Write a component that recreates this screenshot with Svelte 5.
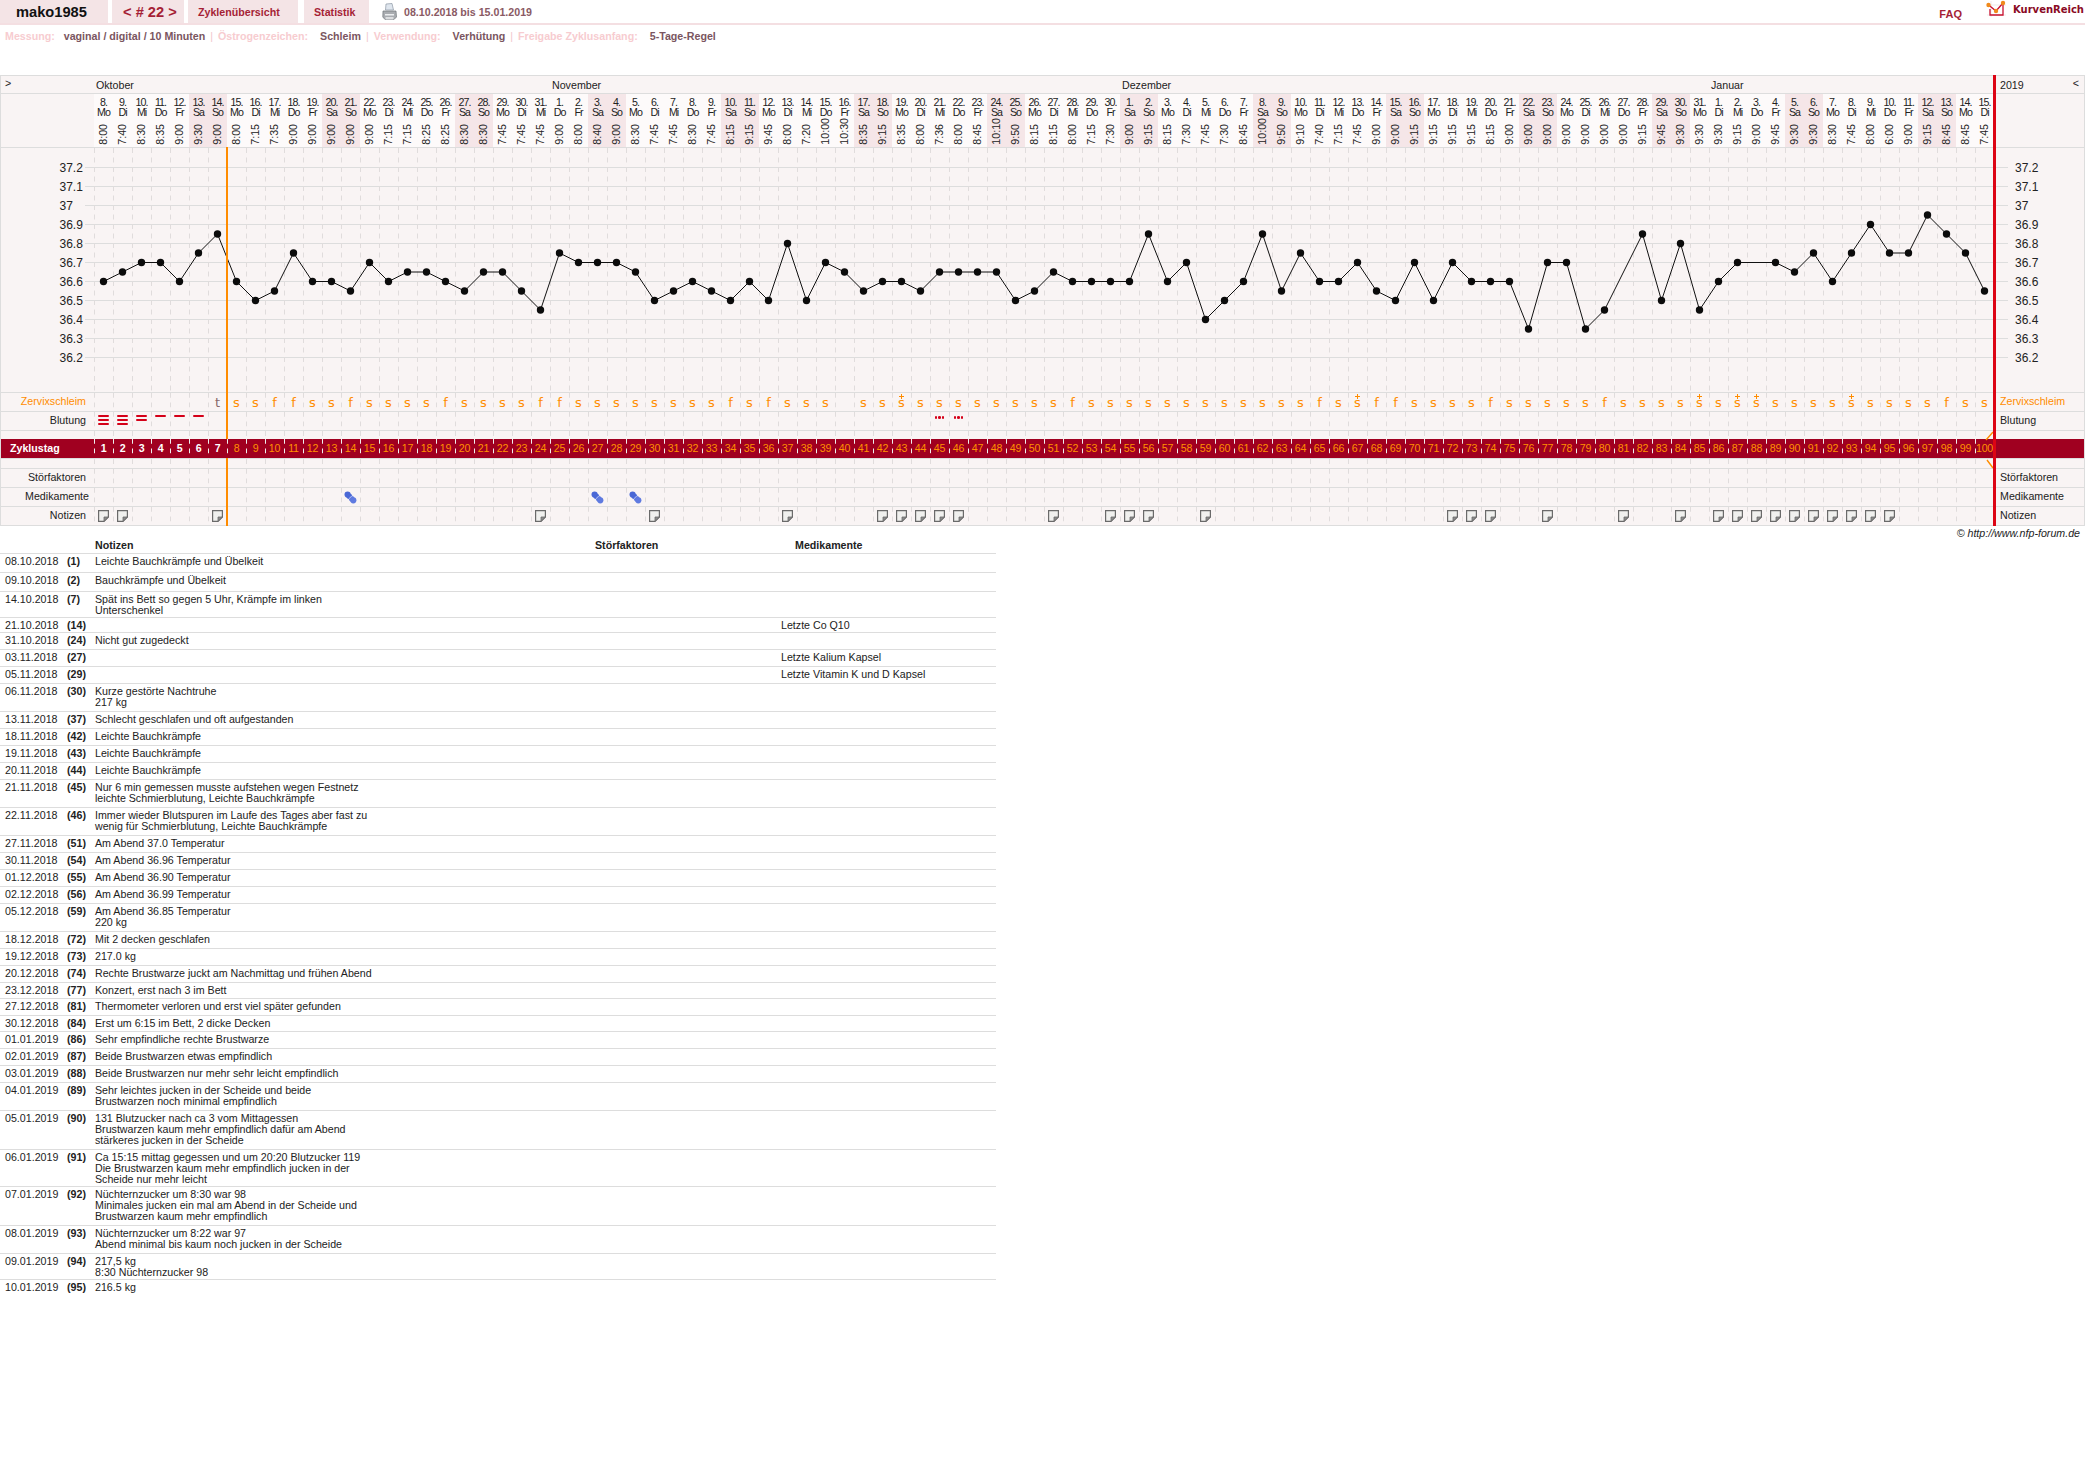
<script>
    const COL = 19;
    const LEFT = 94;
    const wd = ['So', 'Mo', 'Di', 'Mi', 'Do', 'Fr', 'Sa'];

    const times = ('8:00 7:40 8:30 8:35 9:00 9:30 9:00 8:00 7:15 7:35 9:00 9:00 9:00 9:00 9:00 7:15 7:15 8:25 8:25 8:30 8:30 7:45 7:45 7:45 ' +
        '9:00 8:00 8:40 9:00 8:30 7:45 7:45 8:30 7:45 8:15 9:15 9:45 8:00 7:20 10:00 10:30 8:35 9:15 8:35 8:00 7:36 8:00 8:45 10:10 9:50 8:15 8:15 8:00 7:15 7:30 ' +
        '9:00 9:15 8:15 7:30 7:45 7:30 8:45 10:00 9:50 9:10 7:40 7:15 7:45 9:00 9:00 9:15 9:15 9:15 9:15 8:15 9:00 9:00 9:00 9:00 9:00 9:00 9:00 9:15 9:45 9:30 9:30 ' +
        '9:30 9:15 9:00 9:45 9:30 9:30 8:30 7:45 8:00 6:00 9:00 9:15 8:45 8:45 7:45').split(' ');

    const days = times.map((time, i) => {
        const d = new Date(Date.UTC(2018, 9, 8 + i));
        const w = d.getUTCDay();
        return { n: i + 1, date: d.getUTCDate(), name: wd[w], weekend: w === 0 || w === 6, time };
    });

    const temps = [36.6, 36.65, 36.7, 36.7, 36.6, 36.75, 36.85, 36.6, 36.5, 36.55, 36.75, 36.6, 36.6, 36.55, 36.7, 36.6, 36.65, 36.65, 36.6, 36.55,
        36.65, 36.65, 36.55, 36.45, 36.75, 36.7, 36.7, 36.7, 36.65, 36.5, 36.55, 36.6, 36.55, 36.5, 36.6, 36.5, 36.8, 36.5, 36.7, 36.65,
        36.55, 36.6, 36.6, 36.55, 36.65, 36.65, 36.65, 36.65, 36.5, 36.55, 36.65, 36.6, 36.6, 36.6, 36.6, 36.85, 36.6, 36.7, 36.4, 36.5,
        36.6, 36.85, 36.55, 36.75, 36.6, 36.6, 36.7, 36.55, 36.5, 36.7, 36.5, 36.7, 36.6, 36.6, 36.6, 36.35, 36.7, 36.7, 36.35, 36.45,
        null, 36.85, 36.5, 36.8, 36.45, 36.6, 36.7, null, 36.7, 36.65, 36.75, 36.6, 36.75, 36.9, 36.75, 36.75, 36.95, 36.85, 36.75, 36.55];

    const tempY = (t) => 167.5 + (37.2 - t) * 190;
    const colX = (i) => LEFT + COL * (i + 0.5);
    const points = temps.map((t, i) => (t === null ? null : { x: colX(i), y: tempY(t) })).filter(Boolean);
    const linePoints = points.map((p) => `${p.x},${p.y}`).join(' ');
    const gridTemps = ['37.2', '37.1', '37', '36.9', '36.8', '36.7', '36.6', '36.5', '36.4', '36.3', '36.2'];

    const mucus = ('......t' + 'ssffssfssssfssssffsssssss' + 'sfsfsss' + '.' + 'ss+' + 'ssssssss' + 'f' + 'ssssssssssss' + 'f' + 's+' + 'ff' + 'ssss' + 'f' +
        'sssss' + 'f' + 'ssss' + '+s++' + 'ssss' + '+' + 'ssss' + 'f' + 'ss').split('');

    const bleeding = { 1: 3, 2: 3, 3: 2, 4: 1, 5: 1, 6: 1 };
    const spotting = [45, 46];
    const meds = [14, 27, 29];
    const noteDays = [1, 2, 7, 24, 30, 37, 42, 43, 44, 45, 46, 51, 54, 55, 56, 59, 72, 73, 74, 77, 81, 84, 86, 87, 88, 89, 90, 91, 92, 93, 94, 95];

    const months = [
        { label: 'Oktober', span: 24 },
        { label: 'November', span: 30 },
        { label: 'Dezember', span: 31 },
        { label: 'Januar', span: 15 }
    ];

    const notes = [
        { d: '08.10.2018', n: 1, h: 19, t: ['Leichte Bauchkrämpfe und Übelkeit'] },
        { d: '09.10.2018', n: 2, h: 19, t: ['Bauchkrämpfe und Übelkeit'] },
        { d: '14.10.2018', n: 7, h: 26, t: ['Spät ins Bett so gegen 5 Uhr, Krämpfe im linken', 'Unterschenkel'] },
        { d: '21.10.2018', n: 14, h: 15, t: [], m: 'Letzte Co Q10' },
        { d: '31.10.2018', n: 24, h: 17, t: ['Nicht gut zugedeckt'] },
        { d: '03.11.2018', n: 27, h: 17, t: [], m: 'Letzte Kalium Kapsel' },
        { d: '05.11.2018', n: 29, h: 17, t: [], m: 'Letzte Vitamin K und D Kapsel' },
        { d: '06.11.2018', n: 30, h: 28, t: ['Kurze gestörte Nachtruhe', '217 kg'] },
        { d: '13.11.2018', n: 37, h: 17, t: ['Schlecht geschlafen und oft aufgestanden'] },
        { d: '18.11.2018', n: 42, h: 17, t: ['Leichte Bauchkrämpfe'] },
        { d: '19.11.2018', n: 43, h: 17, t: ['Leichte Bauchkrämpfe'] },
        { d: '20.11.2018', n: 44, h: 17, t: ['Leichte Bauchkrämpfe'] },
        { d: '21.11.2018', n: 45, h: 28, t: ['Nur 6 min gemessen musste aufstehen wegen Festnetz', 'leichte Schmierblutung, Leichte Bauchkrämpfe'] },
        { d: '22.11.2018', n: 46, h: 28, t: ['Immer wieder Blutspuren im Laufe des Tages aber fast zu', 'wenig für Schmierblutung, Leichte Bauchkrämpfe'] },
        { d: '27.11.2018', n: 51, h: 17, t: ['Am Abend 37.0 Temperatur'] },
        { d: '30.11.2018', n: 54, h: 17, t: ['Am Abend 36.96 Temperatur'] },
        { d: '01.12.2018', n: 55, h: 17, t: ['Am Abend 36.90 Temperatur'] },
        { d: '02.12.2018', n: 56, h: 17, t: ['Am Abend 36.99 Temperatur'] },
        { d: '05.12.2018', n: 59, h: 28, t: ['Am Abend 36.85 Temperatur', '220 kg'] },
        { d: '18.12.2018', n: 72, h: 17, t: ['Mit 2 decken geschlafen'] },
        { d: '19.12.2018', n: 73, h: 17, t: ['217.0 kg'] },
        { d: '20.12.2018', n: 74, h: 17, t: ['Rechte Brustwarze juckt am Nachmittag und frühen Abend'] },
        { d: '23.12.2018', n: 77, h: 16, t: ['Konzert, erst nach 3 im Bett'] },
        { d: '27.12.2018', n: 81, h: 17, t: ['Thermometer verloren und erst viel später gefunden'] },
        { d: '30.12.2018', n: 84, h: 16, t: ['Erst um 6:15 im Bett, 2 dicke Decken'] },
        { d: '01.01.2019', n: 86, h: 17, t: ['Sehr empfindliche rechte Brustwarze'] },
        { d: '02.01.2019', n: 87, h: 17, t: ['Beide Brustwarzen etwas empfindlich'] },
        { d: '03.01.2019', n: 88, h: 17, t: ['Beide Brustwarzen nur mehr sehr leicht empfindlich'] },
        { d: '04.01.2019', n: 89, h: 28, t: ['Sehr leichtes jucken in der Scheide und beide', 'Brustwarzen noch minimal empfindlich'] },
        { d: '05.01.2019', n: 90, h: 39, t: ['131 Blutzucker nach ca 3 vom Mittagessen', 'Brustwarzen kaum mehr empfindlich dafür am Abend', 'stärkeres jucken in der Scheide'] },
        { d: '06.01.2019', n: 91, h: 37, t: ['Ca 15:15 mittag gegessen und um 20:20 Blutzucker 119', 'Die Brustwarzen kaum mehr empfindlich jucken in der', 'Scheide nur mehr leicht'] },
        { d: '07.01.2019', n: 92, h: 39, t: ['Nüchternzucker um 8:30 war 98', 'Minimales jucken ein mal am Abend in der Scheide und', 'Brustwarzen kaum mehr empfindlich'] },
        { d: '08.01.2019', n: 93, h: 28, t: ['Nüchternzucker um 8:22 war 97', 'Abend minimal bis kaum noch jucken in der Scheide'] },
        { d: '09.01.2019', n: 94, h: 26, t: ['217,5 kg', '8:30 Nüchternzucker 98'] },
        { d: '10.01.2019', n: 95, h: 26, t: ['216.5 kg'], last: true }
    ];
</script>

<header class="topbar">
    <div class="tab user">mako1985</div>
    <div class="tab cycle">&lt; # 22 &gt;</div>
    <a class="tab link wide" href="#zyklen">Zyklenübersicht</a>
    <a class="tab link stat" href="#statistik">Statistik</a>
    <svg class="printer" width="15" height="18" viewBox="0 0 15 18">
        <path d="M4 1 L10 0.5 L11.5 7 L3.5 7 Z" fill="#dfe6ee" stroke="#8c97a3" stroke-width="0.7" />
        <path d="M1 8 L14 8 L14.5 14 L12 16.5 L3 16.5 L0.8 14 Z" fill="#a9acb0" stroke="#70757a" stroke-width="0.7" />
        <rect x="3" y="11" width="9" height="1.5" fill="#eceeef" />
        <rect x="3.5" y="14" width="8" height="2.5" fill="#dcdee0" />
    </svg>
    <span class="range">08.10.2018 bis 15.01.2019</span>
    <a class="faq" href="#faq">FAQ</a>
    <svg class="logo" width="21" height="18" viewBox="0 0 21 18">
        <path d="M1 5 H20 M5 1 V17 M1 15 H20" stroke="#e8e2e2" stroke-width="0.7" fill="none" />
        <path d="M4 9 V15 H17 V4" fill="none" stroke="#c8102e" stroke-width="1.3" />
        <path d="M2 4.5 L10 11 L17 3" fill="none" stroke="#c8102e" stroke-width="1.3" />
        <circle cx="2.5" cy="5" r="2.2" fill="#f08a1d" />
        <circle cx="10" cy="11" r="2.2" fill="#f08a1d" />
        <circle cx="17" cy="3" r="2.2" fill="#f08a1d" />
    </svg>
    <span class="brand">KurvenReich</span>
</header>

<div class="info">
    <span class="key first">Messung:</span><span class="val">vaginal / digital / 10 Minuten</span>
    <span class="sep">|</span>
    <span class="key">Östrogenzeichen:</span><span class="val">Schleim</span>
    <span class="sep">|</span>
    <span class="key">Verwendung:</span><span class="val">Verhütung</span>
    <span class="sep">|</span>
    <span class="key">Freigabe Zyklusanfang:</span><span class="val">5-Tage-Regel</span>
</div>

<section class="chart">
    <div class="row monthrow">
        <div class="lab arrow">&gt;</div>
        <div class="cols">
            {#each months as m}
                <div class="month" style="width:{m.span * COL}px">{m.label}</div>
            {/each}
        </div>
        <div class="rlab yearcell"><span>2019</span><span class="arrow-r">&lt;</span></div>
    </div>

    <div class="row daterow">
        <div class="lab"></div>
        <div class="cols">
            {#each days as d}
                <div class="day" class:weekend={d.weekend}>
                    <span class="num">{d.date}.</span>
                    <span class="wd">{d.name}</span>
                    <span class="time">{d.time}</span>
                </div>
            {/each}
        </div>
        <div class="rlab"></div>
    </div>

    <div class="row plotrow">
        <svg class="plot" width="2083" height="244" viewBox="1 148 2083 244">
            {#each gridTemps as g, i}
                <line x1="85" x2="2008" y1={167.5 + i * 19} y2={167.5 + i * 19} class="grid" />
                <text x="59.5" y={171.5 + i * 19} class="tick">{g}</text>
                <text x="2015" y={171.5 + i * 19} class="tick">{g}</text>
            {/each}
            {#each days as d, i}
                <line x1={LEFT + i * COL + 0.5} x2={LEFT + i * COL + 0.5} y1="148" y2="392" class="dash" />
            {/each}
            <polyline points={linePoints} class="curve" />
            {#each points as p}
                <circle cx={p.x} cy={p.y} r="3.7" class="dot" />
            {/each}
        </svg>
    </div>

    <div class="row lane">
        <div class="lab orange">Zervixschleim</div>
        <div class="cols">
            {#each mucus as c}
                <div class="cell mucus" class:brown={c === 't'}>
                    {#if c === '+'}<i class="plus"></i>s{:else if c !== '.'}{c}{/if}
                </div>
            {/each}
        </div>
        <div class="rlab orange">Zervixschleim</div>
    </div>

    <div class="row lane">
        <div class="lab">Blutung</div>
        <div class="cols">
            {#each days as d}
                <div class="cell bleed">
                    {#if bleeding[d.n]}
                        {#each { length: bleeding[d.n] } as _}<i class="bar"></i>{/each}
                    {:else if spotting.includes(d.n)}
                        <i class="spot"></i><i class="spot"></i><i class="spot"></i>
                    {/if}
                </div>
            {/each}
        </div>
        <div class="rlab">Blutung</div>
    </div>

    <div class="row gap">
        <div class="lab"></div>
        <div class="cols">{#each days as d}<div class="cell"></div>{/each}</div>
        <div class="rlab"></div>
    </div>

    <div class="row band">
        <div class="lab zyklus">Zyklustag</div>
        <div class="cols">
            {#each days as d}
                <div class="cell bandcell" class:past={d.n <= 7}>{d.n}</div>
            {/each}
        </div>
        <div class="rlab"></div>
    </div>

    <div class="row gap tall">
        <div class="lab"></div>
        <div class="cols">{#each days as d}<div class="cell"></div>{/each}</div>
        <div class="rlab"></div>
    </div>

    <div class="row lane">
        <div class="lab">Störfaktoren</div>
        <div class="cols">{#each days as d}<div class="cell"></div>{/each}</div>
        <div class="rlab">Störfaktoren</div>
    </div>

    <div class="row lane">
        <div class="lab medlab">Medikamente</div>
        <div class="cols">
            {#each days as d}
                <div class="cell center">
                    {#if meds.includes(d.n)}
                        <svg width="13" height="13" viewBox="0 0 13 13">
                            <circle cx="3.6" cy="3.6" r="3.1" fill="#4a68d6" />
                            <circle cx="5.3" cy="5.3" r="2.8" fill="#4a68d6" />
                            <circle cx="7.7" cy="7.7" r="2.8" fill="#5f7ae0" />
                            <circle cx="9.3" cy="9.3" r="3.1" fill="#5f7ae0" />
                            <path d="M4.4 8.4 L8.4 4.4" stroke="#c3cdf2" stroke-width="0.8" />
                        </svg>
                    {/if}
                </div>
            {/each}
        </div>
        <div class="rlab">Medikamente</div>
    </div>

    <div class="row lane last">
        <div class="lab">Notizen</div>
        <div class="cols">
            {#each days as d}
                <div class="cell center">
                    {#if noteDays.includes(d.n)}
                        <svg width="11" height="12" viewBox="0 0 11 12">
                            <path d="M0.6 0.6 H10.4 V7 L6 11.4 H0.6 Z" fill="#f0f0ee" stroke="#6a6a6a" stroke-width="1.2" />
                            <path d="M6 11.4 V7 H10.4 Z" fill="#8c8c8c" stroke="#6a6a6a" stroke-width="0.8" />
                        </svg>
                    {/if}
                </div>
            {/each}
        </div>
        <div class="rlab">Notizen</div>
    </div>

    <div class="vline orangeline"></div>
    <div class="vline redline"></div>
    <svg class="ticks" width="10" height="38" viewBox="0 0 10 38">
        <path d="M1 9 L8 1 M2 29 L8 37" stroke="#ff8c00" stroke-width="1.4" fill="none" />
    </svg>
</section>

<div class="credit">© http://www.nfp-forum.de</div>

<section class="list">
    <div class="line head">
        <span></span><span></span><span>Notizen</span><span>Störfaktoren</span><span class="medhead">Medikamente</span>
    </div>
    {#each notes as r}
        <div class="line" class:nolast={r.last} style="height:{r.h}px">
            <span>{r.d}</span>
            <b>({r.n})</b>
            <span>{#each r.t as l}<span class="textline">{l}</span>{/each}</span>
            <span></span>
            <span>{r.m ?? ''}</span>
        </div>
    {/each}
</section>

<style>
    :global(body) {
        margin: 0;
        background: #fff;
        color: #222;
        font-family: "Liberation Sans", Arial, sans-serif;
        font-size: 10.67px;
    }

    .topbar {
        display: flex;
        align-items: stretch;
        height: 23px;
        border-bottom: 2px solid #f4dfe2;
        width: 2085px;
    }
    .tab {
        display: flex;
        align-items: center;
        background: #f4e4e6;
        font-weight: bold;
        text-decoration: none;
        box-sizing: border-box;
        padding-left: 10px;
    }
    .user {
        width: 108px;
        padding-left: 16px;
        font-size: 14.67px;
        color: #111;
        margin-right: 4px;
    }
    .cycle {
        width: 72px;
        padding-left: 11px;
        font-size: 14.67px;
        color: #a51f36;
        margin-right: 4px;
    }
    .link {
        color: #a51f36;
    }
    .wide {
        width: 110px;
        margin-right: 6px;
    }
    .stat {
        width: 65px;
    }
    .printer {
        margin: 3px 7px 0 13px;
    }
    .range {
        align-self: center;
        font-weight: bold;
        color: #8a5a64;
    }
    .faq {
        margin-left: auto;
        align-self: flex-end;
        padding-bottom: 3px;
        font-size: 11px;
        font-weight: bold;
        color: #a51f36;
        text-decoration: none;
    }
    .logo {
        margin: 0 6px 0 24px;
        align-self: flex-start;
    }
    .brand {
        font-family: "DejaVu Sans", sans-serif;
        font-size: 10px;
        font-weight: bold;
        color: #8a0a24;
        padding: 4px 1px 0 0;
        white-space: nowrap;
    }

    .info {
        display: flex;
        height: 50px;
        padding: 5px 0 0 5px;
        box-sizing: border-box;
        font-weight: bold;
        line-height: 12px;
    }
    .key {
        color: #f7ccd0;
        margin-right: 12px;
    }
    .key.first {
        margin-right: 9px;
    }
    .val {
        color: #7a5560;
    }
    .sep {
        color: #f2c8cc;
        font-weight: normal;
        margin: 0 5px;
    }

    .chart {
        position: relative;
        width: 2085px;
        box-sizing: border-box;
        border-left: 1px solid #ddd;
        border-right: 1px solid #ddd;
        background: #f9f4f4;
    }
    .row {
        display: flex;
        border-top: 1px solid #ddd;
        box-sizing: content-box;
    }
    .lab {
        width: 93px;
        flex: none;
        box-sizing: border-box;
        padding-right: 8px;
        text-align: right;
        line-height: 16px;
    }
    .medlab {
        padding-right: 5px;
        white-space: nowrap;
    }
    .cols {
        display: flex;
        width: 1900px;
        flex: none;
    }
    .rlab {
        width: 90px;
        flex: none;
        box-sizing: border-box;
        padding-left: 6px;
        line-height: 16px;
    }
    .orange {
        color: #ff8c00;
    }

    .monthrow {
        height: 17px;
    }
    .arrow {
        text-align: left;
        padding: 0 0 0 4px;
        line-height: 14px;
    }
    .month {
        padding-left: 2px;
        box-sizing: border-box;
        line-height: 18px;
    }
    .yearcell {
        display: flex;
        justify-content: space-between;
        padding-right: 5px;
        line-height: 18px;
    }
    .arrow-r {
        line-height: 14px;
    }

    .daterow {
        height: 53px;
    }
    .day {
        width: 19px;
        display: flex;
        flex-direction: column;
        align-items: center;
        background: #fdfafa;
        padding-top: 3px;
        box-sizing: border-box;
        letter-spacing: -1px;
        line-height: 10px;
    }
    .day.weekend {
        background: #f5e6e8;
    }
    .time {
        margin-top: auto;
        padding-top: 0;
        margin-bottom: 2px;
        writing-mode: vertical-rl;
        transform: rotate(180deg);
        letter-spacing: 0;
        line-height: 11px;
    }

    .plotrow {
        height: 244px;
    }
    .plot {
        display: block;
    }
    .grid {
        stroke: #ddd;
        stroke-width: 1;
    }
    .dash {
        stroke: #e0dcdc;
        stroke-width: 1;
        stroke-dasharray: 5 4.5;
    }
    .curve {
        fill: none;
        stroke: #111;
        stroke-width: 1;
    }
    .dot {
        fill: #0b0b0b;
    }
    .tick {
        font-size: 12px;
        fill: #222;
    }

    .lane {
        height: 18px;
    }
    .last {
        border-bottom: 1px solid #ddd;
    }
    .gap {
        height: 8px;
    }
    .gap.tall {
        height: 9px;
    }
    .cell {
        width: 19px;
        flex: none;
        box-sizing: border-box;
        background-image: linear-gradient(#e0dcdc 55%, transparent 55%);
        background-size: 1px 9.5px;
        background-repeat: repeat-y;
        background-position: left top;
        position: relative;
    }
    .center {
        display: flex;
        align-items: center;
        justify-content: center;
    }
    .mucus {
        font-family: "DejaVu Sans", sans-serif;
        font-size: 13px;
        line-height: 20px;
        text-align: center;
        color: #ff8c00;
    }
    .mucus.brown {
        color: #8a6a6a;
    }
    .plus {
        position: absolute;
        left: 7px;
        top: 1px;
        width: 5px;
        height: 5px;
        background:
            linear-gradient(#ff8c00, #ff8c00) center / 5px 1px no-repeat,
            linear-gradient(#ff8c00, #ff8c00) center / 1px 5px no-repeat;
    }
    .bleed {
        display: flex;
        flex-direction: column;
        align-items: center;
        padding-top: 3px;
        gap: 1.6px;
    }
    .bleed:has(.spot) {
        flex-direction: row;
        justify-content: center;
        gap: 1px;
        padding-top: 4px;
        align-items: flex-start;
    }
    .bar {
        display: block;
        width: 11px;
        height: 2.4px;
        background: #d40018;
        border-radius: 2px;
    }
    .spot {
        display: block;
        width: 2.6px;
        height: 2.6px;
        background: #d40018;
        border-radius: 50%;
    }

    .band {
        height: 19px;
        border-top: 0;
        background: #a00020;
        position: relative;
        z-index: 1;
    }
    .zyklus {
        color: #fff;
        font-weight: bold;
        text-align: left;
        padding: 0 0 0 9px;
        line-height: 19px;
    }
    .bandcell {
        text-align: center;
        line-height: 19px;
        color: #ff9000;
        letter-spacing: -0.3px;
        background-image: linear-gradient(#eee 55%, transparent 55%);
        white-space: nowrap;
    }
    .bandcell.past {
        color: #fff;
        font-weight: bold;
    }

    .vline {
        position: absolute;
        bottom: 0;
    }
    .orangeline {
        left: 225px;
        top: 72px;
        width: 2px;
        background: #ff8c00;
    }
    .redline {
        left: 1992px;
        top: 0;
        width: 3px;
        background: #dc0414;
        z-index: 2;
    }
    .ticks {
        position: absolute;
        left: 1984px;
        top: 356px;
        z-index: 1;
    }

    .credit {
        width: 2080px;
        height: 14px;
        text-align: right;
        font-style: italic;
        line-height: 15px;
        color: #222;
    }

    .list {
        width: 996px;
    }
    .line {
        display: grid;
        grid-template-columns: 67px 28px 500px 186px 1fr;
        box-sizing: border-box;
        border-bottom: 1px solid #ddd;
        padding-top: 2px;
        line-height: 11px;
    }
    .line > :first-child {
        padding-left: 5px;
    }
    .line.nolast {
        border-bottom: 0;
    }
    .head {
        height: 14px;
        padding-top: 0;
        font-weight: bold;
    }
    .medhead {
        padding-left: 14px;
    }
    .textline {
        display: block;
        white-space: nowrap;
    }
</style>
